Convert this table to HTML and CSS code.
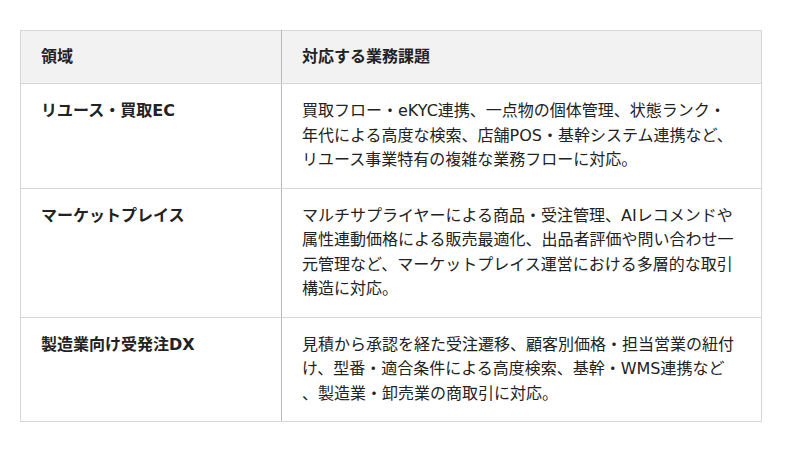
FILE: index.html
```html
<!DOCTYPE html>
<html lang="ja">
<head>
<meta charset="utf-8">
<link rel="stylesheet" href="styles.css">
</head>
<body>
<table class="domain-table">
  <thead>
    <tr>
      <th class="col-domain">領域</th>
      <th class="col-issue">対応する業務課題</th>
    </tr>
  </thead>
  <tbody>
    <tr>
      <th class="row-head">リユース・買取EC</th>
      <td>買取フロー・eKYC連携、一点物の個体管理、状態ランク・年代による高度な検索、店舗POS・基幹システム連携など、リユース事業特有の複雑な業務フローに対応。</td>
    </tr>
    <tr>
      <th class="row-head">マーケットプレイス</th>
      <td>マルチサプライヤーによる商品・受注管理、AIレコメンドや属性連動価格による販売最適化、出品者評価や問い合わせ一元管理など、マーケットプレイス運営における多層的な取引構造に対応。</td>
    </tr>
    <tr>
      <th class="row-head">製造業向け受発注DX</th>
      <td>見積から承認を経た受注遷移、顧客別価格・担当営業の紐付け、型番・適合条件による高度検索、基幹・WMS連携など<br>、製造業・卸売業の商取引に対応。</td>
    </tr>
  </tbody>
</table>
</body>
</html>
```
FILE: styles.css
```css
html, body {
  margin: 0;
  background: #ffffff;
}
body {
  padding: 30px 20px;
  font-family: "DejaVu Sans", "Noto Sans CJK JP", sans-serif;
  font-size: 16px;
  color: #222222;
}
.domain-table {
  width: 742px;
  border-collapse: collapse;
  table-layout: fixed;
}
.domain-table th,
.domain-table td {
  border: 1px solid #d6d6d6;
  padding: 15px 20px;
  line-height: 24.5px;
  text-align: left;
  vertical-align: top;
}
.domain-table thead th {
  background: #f2f2f2;
  font-weight: bold;
  padding: 14px 20px;
  line-height: 24px;
}
.col-domain {
  width: 220px;
}
.domain-table th:first-child {
  border-right-color: #b8b8b8;
}
.row-head {
  font-weight: bold;
}
.domain-table td {
  font-weight: normal;
}
```
